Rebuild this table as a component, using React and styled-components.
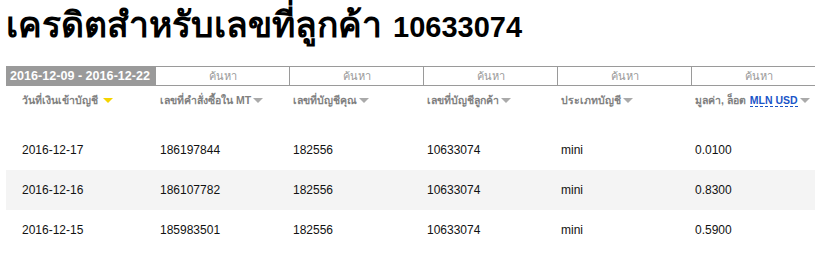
import React from "react";
import styled, { createGlobalStyle } from "styled-components";

const GlobalStyle = createGlobalStyle`
  html, body {
    margin: 0;
    padding: 0;
    background: #fff;
    overflow: hidden;
  }
  body {
    font-family: "Liberation Sans", Arial, sans-serif;
    color: #111;
  }
`;

const Page = styled.div`
  width: 815px;
  height: 256px;
  padding: 0 0 0 6px;
  box-sizing: border-box;
  overflow: hidden;
`;

const Title = styled.h1`
  margin: 0;
  padding-top: 6px;
  height: 66px;
  box-sizing: border-box;
  font-size: 29px;
  line-height: 38px;
  font-weight: bold;
  color: #000;
  white-space: nowrap;
`;

const ThaiPart = styled.span`
  font-size: 35.5px;
  margin-right: 3px;
`;

const COLS = "150px 133px 134px 134px 134px 134px";

const FilterRow = styled.div`
  display: grid;
  grid-template-columns: ${COLS};
  height: 18px;
  border-top: 1px solid #9a9a9a;
  border-bottom: 1px solid #9a9a9a;
`;

const DateRange = styled.div`
  background: #9a9a9a;
  color: #fff;
  font-size: 12.6px;
  font-weight: bold;
  line-height: 18px;
  padding-left: 4px;
  white-space: nowrap;
  overflow: hidden;
`;

const SearchCell = styled.div`
  border-left: 1px solid #9a9a9a;
  color: #9a9a9a;
  font-size: 11px;
  line-height: 18px;
  text-align: center;
  &:nth-child(2) {
    border-left: none;
  }
`;

const HeadRow = styled.div`
  display: grid;
  grid-template-columns: ${COLS};
  height: 44px;
  padding-top: 7px;
  box-sizing: border-box;
`;

const HeadCell = styled.div`
  font-size: 10.5px;
  font-weight: bold;
  color: #808080;
  white-space: nowrap;
  padding-left: ${(p) => (p.$first ? "16px" : "4px")};
  display: flex;
  align-items: flex-start;
  gap: 2px;
  line-height: 14px;
`;

const Arrow = styled.span`
  display: inline-block;
  width: 0;
  height: 0;
  margin-top: 5px;
  margin-left: ${(p) => (p.$active ? "3px" : "0")};
  border-left: 5px solid transparent;
  border-right: 5px solid transparent;
  border-top: 5px solid ${(p) => (p.$active ? "#f5d400" : "#aaa")};
`;

const Unit = styled.span`
  color: #1a55c8;
  border-bottom: 1px dashed #1a55c8;
  margin-left: 4px;
`;

const Row = styled.div`
  display: grid;
  grid-template-columns: ${COLS};
  height: 40px;
  align-items: center;
  background: ${(p) => (p.$shade ? "#f4f4f4" : "#fff")};
`;

const Cell = styled.div`
  font-size: 12px;
  color: #111;
  padding-left: ${(p) => (p.$first ? "16px" : "4px")};
  white-space: nowrap;
`;

const heads = [
  "วันที่เงินเข้าบัญชี",
  "เลขที่คำสั่งซื้อใน MT",
  "เลขที่บัญชีคุณ",
  "เลขที่บัญชีลูกค้า",
  "ประเภทบัญชี",
];

const rows = [
  ["2016-12-17", "186197844", "182556", "10633074", "mini", "0.0100"],
  ["2016-12-16", "186107782", "182556", "10633074", "mini", "0.8300"],
  ["2016-12-15", "185983501", "182556", "10633074", "mini", "0.5900"],
];

export default function App() {
  return (
    <>
      <GlobalStyle />
      <Page>
        <Title>
          <ThaiPart>เครดิตสำหรับเลขที่ลูกค้า</ThaiPart> 10633074
        </Title>
        <FilterRow>
          <DateRange>2016-12-09 - 2016-12-22</DateRange>
          {[0, 1, 2, 3, 4].map((i) => (
            <SearchCell key={i}>ค้นหา</SearchCell>
          ))}
        </FilterRow>
        <HeadRow>
          {heads.map((h, i) => (
            <HeadCell key={h} $first={i === 0}>
              {h}
              <Arrow $active={i === 0} />
            </HeadCell>
          ))}
          <HeadCell>
            <span>
              มูลค่า, ล็อต<Unit>MLN USD</Unit>
            </span>
            <Arrow />
          </HeadCell>
        </HeadRow>
        {rows.map((r, ri) => (
          <Row key={r[0]} $shade={ri === 1}>
            {r.map((c, ci) => (
              <Cell key={ci} $first={ci === 0}>
                {c}
              </Cell>
            ))}
          </Row>
        ))}
      </Page>
    </>
  );
}
